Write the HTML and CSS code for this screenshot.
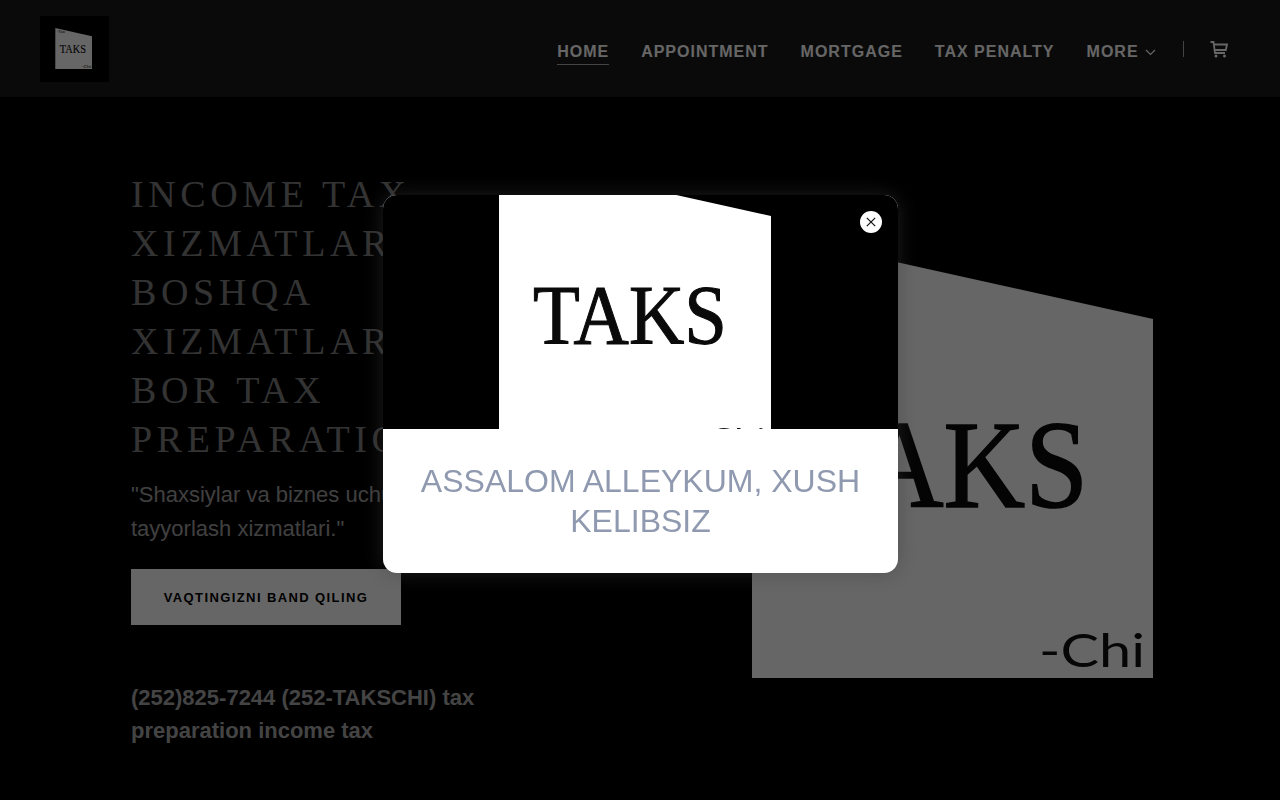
FILE: index.html
```html
<!DOCTYPE html>
<html lang="en">

<head>
    <meta charset="UTF-8" />
    <meta name="viewport" content="width=device-width, initial-scale=1.0" />
    <title>Taks-Chi</title>
    <link rel="stylesheet" href="styles.css">
</head>

<body>
    <!-- shared logo artwork, used three times at different crops -->
    <svg class="defs" width="0" height="0">
        <symbol id="taks-logo" viewBox="0 0 401 448" overflow="visible">
            <polygon points="0,0 401,89 401,448 0,448" fill="#fff" />
            <text x="18" y="57" class="logo-small">-Tax</text>
            <text x="50" y="277" class="logo-name" textLength="286" lengthAdjust="spacingAndGlyphs">TAKS</text>
            <text x="287" y="437" class="logo-chi" textLength="106" lengthAdjust="spacingAndGlyphs">-Chi</text>
        </symbol>
    </svg>

    <header class="site-header">
        <a class="logo-box" href="#">
            <svg width="69" height="66" viewBox="-167 -131 754 721">
                <use href="#taks-logo" x="0" y="0" width="401" height="448" />
            </svg>
        </a>
        <nav class="nav">
            <a class="nav-link active" href="#">Home</a>
            <a class="nav-link" href="#">Appointment</a>
            <a class="nav-link" href="#">Mortgage</a>
            <a class="nav-link" href="#">Tax Penalty</a>
            <a class="nav-link more" href="#">More
                <svg width="11" height="7" viewBox="0 0 11 7">
                    <path d="M1 1l4.5 4.5L10 1" fill="none" stroke="currentColor" stroke-width="1.2" />
                </svg>
            </a>
            <span class="nav-divider"></span>
            <a class="cart" href="#">
                <svg width="18" height="17" viewBox="0 0 18 17">
                    <path d="M0.5 1h3l1.5 11h10M4 3.5h13l-1.2 5.5H5" fill="none" stroke="currentColor" stroke-width="1.8" />
                    <circle cx="6" cy="15" r="1.5" fill="currentColor" />
                    <circle cx="14.5" cy="15" r="1.5" fill="currentColor" />
                </svg>
            </a>
        </nav>
    </header>

    <main class="hero">
        <div class="hero-text">
            <h1 class="hero-title">Income Tax Xizmatlari Boshqa Xizmatlari Bor Tax Preparation</h1>
            <p class="hero-tagline">"Shaxsiylar va biznes uchun soliq tayyorlash xizmatlari."</p>
            <a class="hero-btn" href="#">Vaqtingizni band qiling</a>
            <p class="hero-phone">(252)825-7244 (252-TAKSCHI) tax preparation income tax</p>
        </div>
        <svg class="hero-logo" width="401" height="448" viewBox="0 0 401 448">
            <use href="#taks-logo" x="0" y="0" width="401" height="448" />
        </svg>
    </main>

    <div class="overlay">
        <div class="modal">
            <div class="modal-image">
                <svg width="272" height="234" viewBox="0 58 401 345">
                    <use href="#taks-logo" x="0" y="0" width="401" height="448" />
                </svg>
                <button class="modal-close" type="button" aria-label="Close">
                    <svg width="10" height="10" viewBox="0 0 10 10">
                        <path d="M0.8 0.8l8.4 8.4M9.2 0.8L0.8 9.2" fill="none" stroke="#111" stroke-width="1.2" />
                    </svg>
                </button>
            </div>
            <div class="modal-body">
                <div class="modal-text">ASSALOM ALLEYKUM, XUSH KELIBSIZ</div>
            </div>
        </div>
    </div>
</body>

</html>
```
FILE: styles.css
```css
body {
    font-family: "Liberation Sans", Arial, sans-serif;
    margin: 0;
    padding: 0;
    height: 800px;
    overflow: hidden;
    background-color: #000;
    color: #fff;
}

a {
    color: inherit;
    text-decoration: none;
}

.defs {
    position: absolute;
}

/* Logo */
.logo-small {
    font-family: "Lato", sans-serif;
    font-size: 50px;
    fill: #111;
}

.logo-name {
    font-family: "Liberation Serif", serif;
    font-size: 125px;
    fill: #0a0a0a;
    stroke: #0a0a0a;
    stroke-width: 1.6px;
}

.logo-chi {
    font-family: "Lato", sans-serif;
    font-size: 47px;
    fill: #111;
}

/* Header */
.site-header {
    display: flex;
    justify-content: space-between;
    align-items: flex-start;
    height: 97px;
    padding: 16px 52px 0 40px;
    box-sizing: border-box;
    background-color: #1a1a1a;
}

.logo-box {
    display: block;
    height: 66px;
    background-color: #000;
}

.nav {
    display: flex;
    align-items: flex-start;
    gap: 32px;
    padding-top: 25px;
    font-size: 16px;
    font-weight: bold;
    letter-spacing: 1px;
    text-transform: uppercase;
    color: #fff;
}

.nav-link {
    display: block;
    line-height: 20px;
    padding-top: 1px;
    padding-bottom: 2px;
    border-bottom: 1px solid transparent;
}

.nav-link.active {
    border-bottom-color: #aaa;
}

.more svg {
    margin-left: 1px;
    vertical-align: 1px;
}

.nav-divider {
    width: 1px;
    height: 16px;
    background-color: #aaa;
    margin-left: -5px;
}

.cart {
    display: block;
    height: 17px;
    margin-left: -6px;
}

/* Hero */
.hero {
    display: flex;
    justify-content: space-between;
    padding: 0 127px 0 131px;
}

.hero-text {
    width: 360px;
    padding-top: 73px;
}

.hero-title {
    margin: 0;
    font-family: "Liberation Serif", serif;
    font-size: 38px;
    font-weight: normal;
    line-height: 49px;
    letter-spacing: 4.6px;
    text-transform: uppercase;
    color: #808080;
}

.hero-tagline {
    margin: 14px 0 0;
    font-size: 22px;
    line-height: 34px;
    color: #a0a0a0;
}

.hero-btn {
    display: block;
    width: 270px;
    margin-top: 23px;
    padding-top: 1px;
    font-size: 13px;
    font-weight: bold;
    line-height: 55px;
    letter-spacing: 1.4px;
    text-align: center;
    text-transform: uppercase;
    background-color: #fff;
    color: #000;
}

.hero-phone {
    margin: 56px 0 0;
    font-size: 22px;
    font-weight: bold;
    line-height: 33px;
    color: #aaa;
}

.hero-logo {
    display: block;
    margin-top: 133px;
}

/* Welcome popup */
.overlay {
    position: fixed;
    top: 0;
    left: 0;
    right: 0;
    bottom: 0;
    display: flex;
    justify-content: center;
    align-items: center;
    padding: 0 0 32px 1px;
    background-color: rgba(0, 0, 0, 0.6);
}

.modal {
    position: relative;
    width: 515px;
    border-radius: 14px;
    overflow: hidden;
    background-color: #fff;
    box-shadow: 0 0 20px rgba(60, 60, 60, 0.5);
}

.modal-image {
    display: flex;
    justify-content: center;
    height: 234px;
    padding-right: 12px;
    box-sizing: border-box;
    background-color: #000;
}

.modal-close {
    position: absolute;
    top: 16px;
    right: 16px;
    display: flex;
    justify-content: center;
    align-items: center;
    width: 22px;
    height: 22px;
    padding: 0;
    border: none;
    border-radius: 50%;
    background-color: #fff;
}

.modal-body {
    padding: 32px 20px 32px;
    text-align: center;
}

.modal-text {
    font-size: 32px;
    line-height: 40px;
    color: #8f99af;
}
```
